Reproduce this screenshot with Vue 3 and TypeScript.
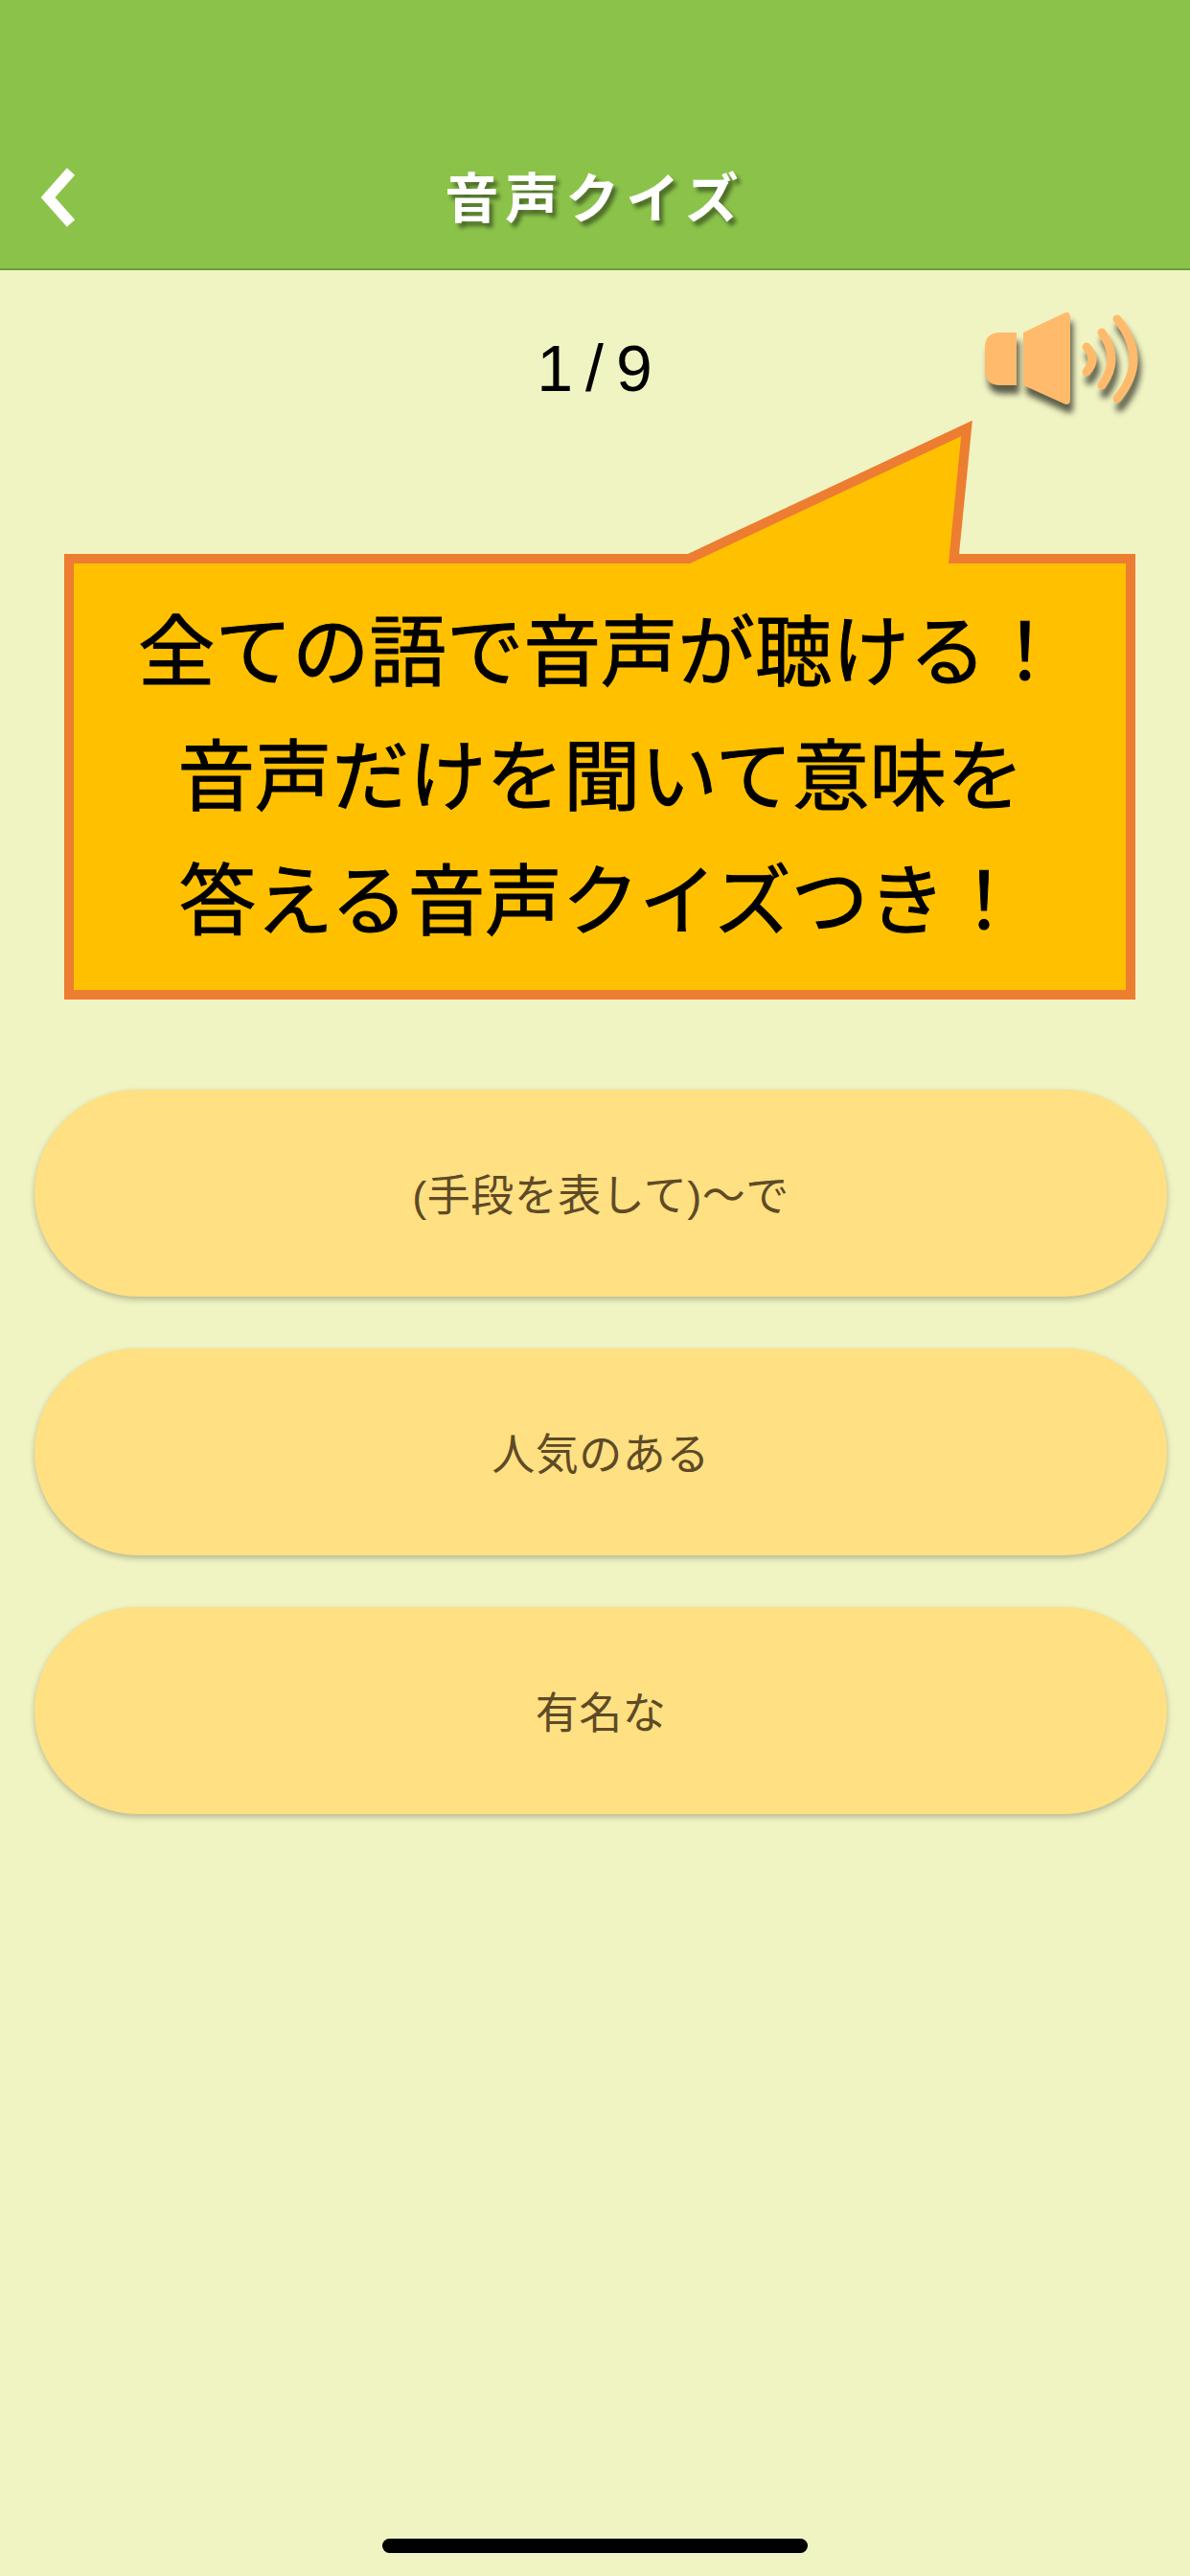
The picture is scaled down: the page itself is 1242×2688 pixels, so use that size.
<script setup lang="ts">
const current = 1
const total = 9

const tipLines: string[] = [
  '全ての語で音声が聴ける！',
  '音声だけを聞いて意味を',
  '答える音声クイズつき！',
]

const choices: string[] = ['(手段を表して)〜で', '人気のある', '有名な']
</script>

<template>
  <div class="page">
    <header class="nav">
      <svg class="back" width="50" height="76" viewBox="0 0 50 76">
        <polyline points="38,9 14,36 38,63" fill="none" stroke="#fff" stroke-width="11" />
      </svg>
      <h1 class="title">音声クイズ</h1>
    </header>

    <div class="quiz-head">
      <div class="count">{{ current }}/{{ total }}</div>
      <svg class="speaker" width="175" height="115" viewBox="1020 320 175 115">
        <path d="M1044 347H1061V402H1044C1033 402 1028 397 1028 386V363C1028 352 1033 347 1044 347Z" fill="#ffbb6b" />
        <path d="M1068 347L1110 327Q1117 324 1117 331V417Q1117 424 1110 421L1068 402Z" fill="#ffbb6b" />
        <g fill="none" stroke="#ffbb6b" stroke-width="9" stroke-linecap="round">
          <path d="M1134 362Q1146 375 1134 388" />
          <path d="M1150 347Q1170 375 1150 402" />
          <path d="M1166 333Q1200 375 1166 416" />
        </g>
      </svg>
    </div>

    <div class="choices">
      <button v-for="choice in choices" :key="choice" class="choice">{{ choice }}</button>
    </div>

    <div class="tip">
      <svg class="tip-shape" width="1242" height="700" viewBox="0 400 1242 700">
        <polygon
          points="72,583 719,583 1009,447 995.5,583 1180,583 1180,1038 72,1038"
          fill="#ffc000"
          stroke="#ed7d31"
          stroke-width="10"
        />
      </svg>
      <div class="tip-text">
        <p v-for="line in tipLines" :key="line">{{ line }}</p>
      </div>
    </div>

    <div class="home-bar"></div>
  </div>
</template>

<style scoped>
.page {
  position: relative;
  display: flex;
  flex-direction: column;
  width: 1242px;
  height: 2688px;
  background: #f0f4c3;
  font-family: "Liberation Sans", "Noto Sans CJK JP", sans-serif;
}

.nav {
  position: relative;
  display: flex;
  align-items: center;
  justify-content: center;
  flex-shrink: 0;
  height: 282px;
  padding: 130px 0 6px;
  box-sizing: border-box;
  background: #8bc34a;
  border-bottom: 2px solid #689f38;
}

.back {
  position: absolute;
  left: 36px;
  top: 170px;
}

.title {
  margin: 0;
  font-family: "Noto Sans CJK JP", sans-serif;
  font-size: 56px;
  font-weight: 700;
  letter-spacing: 7px;
  color: #fff;
  text-shadow: 4px 5px 4px rgba(0, 0, 0, 0.45);
}

.quiz-head {
  display: flex;
  justify-content: flex-end;
  position: relative;
  padding: 38px 47px 0 0;
}

.count {
  position: absolute;
  left: 12px;
  right: 0;
  top: 64px;
  text-align: center;
  font-size: 68px;
  line-height: 76px;
  letter-spacing: 13px;
  color: #000;
}

.speaker {
  display: block;
  overflow: visible;
  filter: drop-shadow(3px 9px 3px rgba(0, 0, 0, 0.62));
}

.choices {
  display: flex;
  flex-direction: column;
  gap: 54px;
  margin: 702px 24px 0 36px;
}

.choice {
  height: 216px;
  border: none;
  border-radius: 108px;
  padding: 0 0 2px;
  background: #ffe082;
  box-shadow: 0 3px 6px rgba(0, 0, 0, 0.25);
  font-family: "Liberation Sans", "Noto Sans CJK JP", sans-serif;
  font-size: 45px;
  letter-spacing: 0.5px;
  color: #5e4a26;
}

.tip {
  position: absolute;
  left: 0;
  top: 400px;
  width: 1242px;
  height: 700px;
}

.tip-shape {
  position: absolute;
  left: 0;
  top: 0;
}

.tip-text {
  position: relative;
  padding: 209px 0 0 12px;
  text-align: center;
  font-family: "Noto Sans CJK JP", sans-serif;
  font-size: 80.5px;
  font-weight: 400;
  line-height: 130px;
  color: #000;
  -webkit-text-stroke: 1px #000;
}

.tip-text p {
  margin: 0;
}

.home-bar {
  width: 444px;
  height: 15px;
  margin: auto 0 24px 399px;
  border-radius: 8px;
  background: #000;
}
</style>

<style>
html,
body {
  margin: 0;
  background: #f0f4c3;
}
</style>
